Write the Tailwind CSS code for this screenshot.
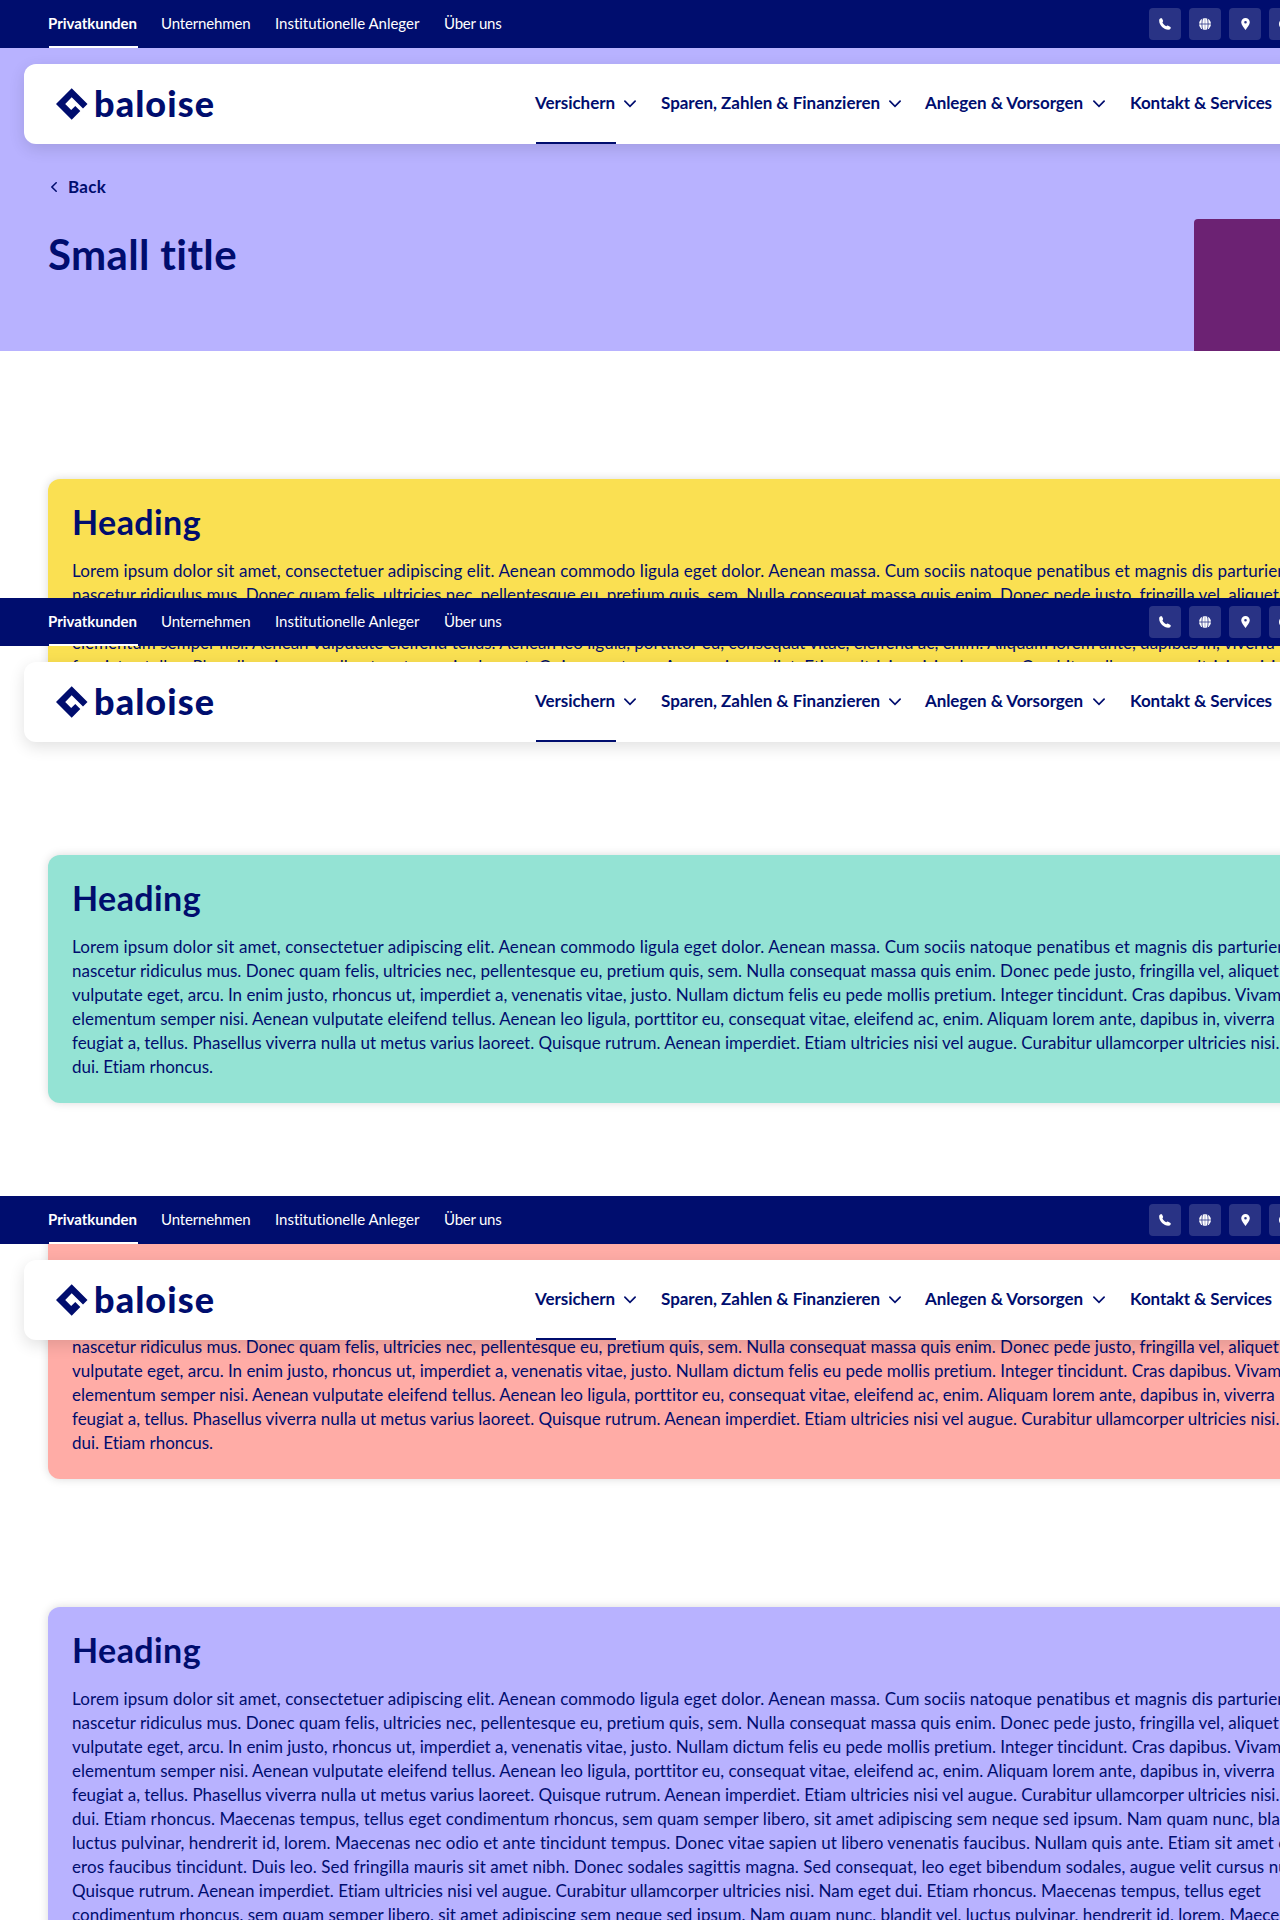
<!DOCTYPE html>
<html lang="de">
<head>
<meta charset="utf-8">
<title>Baloise</title>
<script src="https://cdn.jsdelivr.net/npm/@tailwindcss/browser@4"></script>
</head>
<body class="bg-white">
<div class="relative h-[1920px] w-[1280px] overflow-hidden font-['Lato',sans-serif] text-[17px] leading-6 text-[#000d6e]">

<template id="site-header">
  <div class="flex h-12 w-[1440px] items-stretch bg-[#000d6e] pl-12 text-[15px] text-white">
    <nav class="flex w-[1101px] gap-6 leading-[46px] whitespace-nowrap">
      <a class="relative w-[89px] font-bold tracking-[-0.03px]">Privatkunden<i class="absolute bottom-0 left-px h-0.5 w-full bg-white"></i></a>
      <a class="w-[90px] tracking-[-0.14px]">Unternehmen</a>
      <a class="w-[145px] tracking-[-0.02px]">Institutionelle Anleger</a>
      <a class="tracking-[-0.24px]">Über uns</a>
    </nav>
    <div class="flex items-center gap-2">
      <span class="flex size-8 items-center justify-center rounded bg-white/16"><svg class="size-3" viewBox="0 0 12 12" fill="#fff"><path d="M.3 1.500C.7.500 2 0 2.900.300L4 2.600c.3.700-.1 1.300-.6 1.700.6 1.700 2 3.200 3.900 4 .4-.6 1.200-.9 1.900-.6l2.300 1.200c.6.8.1 2.100-.7 2.700C5.500 12.800-.8 6.800.3 1.500z"/></svg></span>
      <span class="flex size-8 items-center justify-center rounded bg-white/16"><svg class="size-3" viewBox="0 0 12 12"><circle cx="6" cy="6" r="6" fill="#fff"/><path d="M0 6h12M3.800 0C2.600 3.500 2.600 8.500 3.800 12M8.200 0c1.200 3.500 1.200 8.500 0 12" fill="none" stroke="#293485" stroke-width=".8"/><path d="M6 0v12" stroke="#293485" stroke-width=".4"/></svg></span>
      <span class="flex size-8 items-center justify-center rounded bg-white/16"><svg class="h-3 w-[9px]" viewBox="0 0 9 12" fill="#fff"><path fill-rule="evenodd" d="M4.500 0A4.300 4.300 0 0 0 .2 4.300C.2 7.200 3 9.600 4.500 12 6 9.600 8.800 7.200 8.800 4.300A4.300 4.300 0 0 0 4.500 0zm0 3a1.300 1.300 0 1 1 0 2.600 1.300 1.300 0 0 1 0-2.600z"/></svg></span>
      <span class="flex size-8 items-center justify-center rounded bg-white/16"><svg class="size-3" viewBox="0 0 12 12"><circle cx="6" cy="6" r="6" fill="#fff"/></svg></span>
    </div>
  </div>
  <div class="mt-4 ml-6 flex h-20 w-[1392px] items-center rounded-xl bg-white pl-8 shadow-[0_5px_16px_rgba(0,0,0,0.12)]">
    <div class="flex w-[479px] items-center">
      <svg class="size-8" viewBox="0 0 32 32" fill="#000d6e"><path d="M15.700 0.300L31.500 16 27 20.500 15.700 9.300 9.200 16l6 5.900 4.100-3.900 5 5L15.700 31.700 0 16z"/></svg>
      <span class="ml-1.5 pb-0.5 text-4xl leading-10 font-black tracking-[1.07px]">baloise</span>
    </div>
    <nav class="flex h-20 leading-[78px] font-bold whitespace-nowrap">
      <a class="relative flex w-[126px] tracking-[-0.04px]">Versichern<svg class="absolute top-9 left-[89px] h-2 w-3" viewBox="0 0 12 8" fill="none" stroke="#000d6e" stroke-width="1.700" stroke-linecap="round"><path d="M.9 1.200L6 6.400l5.100-5.200"/></svg><i class="absolute bottom-0 left-px h-0.5 w-20 bg-[#000d6e]"></i></a>
      <a class="relative flex w-[264px] tracking-[-0.03px]">Sparen, Zahlen &amp; Finanzieren<svg class="absolute top-9 left-[228px] h-2 w-3" viewBox="0 0 12 8" fill="none" stroke="#000d6e" stroke-width="1.700" stroke-linecap="round"><path d="M.9 1.200L6 6.400l5.100-5.200"/></svg></a>
      <a class="relative flex w-[205px] tracking-[-0.08px]">Anlegen &amp; Vorsorgen<svg class="absolute top-9 left-[168px] h-2 w-3" viewBox="0 0 12 8" fill="none" stroke="#000d6e" stroke-width="1.700" stroke-linecap="round"><path d="M.9 1.200L6 6.400l5.100-5.200"/></svg></a>
      <a class="tracking-[-0.1px]">Kontakt &amp; Services</a>
    </nav>
  </div>
</template>

<template id="card-text">
  <h2 class="mb-[18px] text-[34px] leading-[38px] font-bold tracking-[0.41px]">Heading</h2>
  <p class="tracking-[0.106px]">Lorem ipsum dolor sit amet, consectetuer adipiscing elit. Aenean commodo ligula eget dolor. Aenean massa. Cum sociis natoque penatibus et magnis dis parturient montes,</p>
  <p class="tracking-[-0.004px]">nascetur ridiculus mus. Donec quam felis, ultricies nec, pellentesque eu, pretium quis, sem. Nulla consequat massa quis enim. Donec pede justo, fringilla vel, aliquet nec,</p>
  <p class="tracking-[-0.012px]">vulputate eget, arcu. In enim justo, rhoncus ut, imperdiet a, venenatis vitae, justo. Nullam dictum felis eu pede mollis pretium. Integer tincidunt. Cras dapibus. Vivamus</p>
  <p class="tracking-[-0.002px]">elementum semper nisi. Aenean vulputate eleifend tellus. Aenean leo ligula, porttitor eu, consequat vitae, eleifend ac, enim. Aliquam lorem ante, dapibus in, viverra&nbsp; quis,</p>
  <p class="tracking-[-0.017px]">feugiat a, tellus. Phasellus viverra nulla ut metus varius laoreet. Quisque rutrum. Aenean imperdiet. Etiam ultricies nisi vel augue. Curabitur ullamcorper ultricies nisi. Nam eget</p>
</template>

<header data-clone="site-header" class="absolute top-0 left-0 z-10"></header>
<header data-clone="site-header" class="absolute top-[598px] left-0 z-10"></header>
<header data-clone="site-header" class="absolute top-[1196px] left-0 z-10"></header>

<section class="flex h-[351px] justify-between bg-[#b8b2ff] pt-[175px] pl-12">
  <div>
    <a class="flex items-center font-bold"><svg class="mr-[11px] ml-[3px] h-2.5 w-1.5" viewBox="0 0 6 10" fill="none" stroke="#000d6e" stroke-width="1.500" stroke-linecap="round"><path d="M5.200.7L.9 5l4.300 4.300"/></svg><span class="tracking-[0.26px]">Back</span></a>
    <h1 class="mt-[31px] text-[42px] leading-12 font-bold tracking-[0.36px]">Small title</h1>
  </div>
  <div class="mt-11 w-[86px] rounded-tl bg-[#6c2273]"></div>
</section>

<main class="ml-12 flex w-[1344px] flex-col gap-32 pt-32 whitespace-nowrap">
  <article class="h-[248px] rounded-xl bg-[#fae052] p-6 shadow-[0_0_10px_rgba(0,0,0,0.15)]">
    <div data-clone="card-text"></div>
    <p class="tracking-[-0.03px]">dui. Etiam rhoncus.</p>
  </article>
  <article class="h-[248px] rounded-xl bg-[#94e3d4] p-6 shadow-[0_0_10px_rgba(0,0,0,0.15)]">
    <div data-clone="card-text"></div>
    <p class="tracking-[-0.03px]">dui. Etiam rhoncus.</p>
  </article>
  <article class="h-[248px] rounded-xl bg-[#ffaca6] p-6 shadow-[0_0_10px_rgba(0,0,0,0.15)]">
    <div data-clone="card-text"></div>
    <p class="tracking-[-0.03px]">dui. Etiam rhoncus.</p>
  </article>
  <article class="h-[448px] rounded-xl bg-[#b8b2ff] p-6 shadow-[0_0_10px_rgba(0,0,0,0.15)]">
    <div data-clone="card-text"></div>
    <p class="tracking-[0.071px]">dui. Etiam rhoncus. Maecenas tempus, tellus eget condimentum rhoncus, sem quam semper libero, sit amet adipiscing sem neque sed ipsum. Nam quam nunc, blandit vel,</p>
    <p class="tracking-[0.025px]">luctus pulvinar, hendrerit id, lorem. Maecenas nec odio et ante tincidunt tempus. Donec vitae sapien ut libero venenatis faucibus. Nullam quis ante. Etiam sit amet orci eget</p>
    <p class="tracking-[0.072px]">eros faucibus tincidunt. Duis leo. Sed fringilla mauris sit amet nibh. Donec sodales sagittis magna. Sed consequat, leo eget bibendum sodales, augue velit cursus nunc,</p>
    <p class="tracking-[-0.004px]">Quisque rutrum. Aenean imperdiet. Etiam ultricies nisi vel augue. Curabitur ullamcorper ultricies nisi. Nam eget dui. Etiam rhoncus. Maecenas tempus, tellus eget</p>
    <p class="tracking-[0.037px]">condimentum rhoncus, sem quam semper libero, sit amet adipiscing sem neque sed ipsum. Nam quam nunc, blandit vel, luctus pulvinar, hendrerit id, lorem. Maecenas nec</p>
  </article>
</main>
</div>
<script>
  document.querySelectorAll('[data-clone]').forEach(el => {
    el.append(document.getElementById(el.dataset.clone).content.cloneNode(true));
  });
</script>
</body>
</html>
